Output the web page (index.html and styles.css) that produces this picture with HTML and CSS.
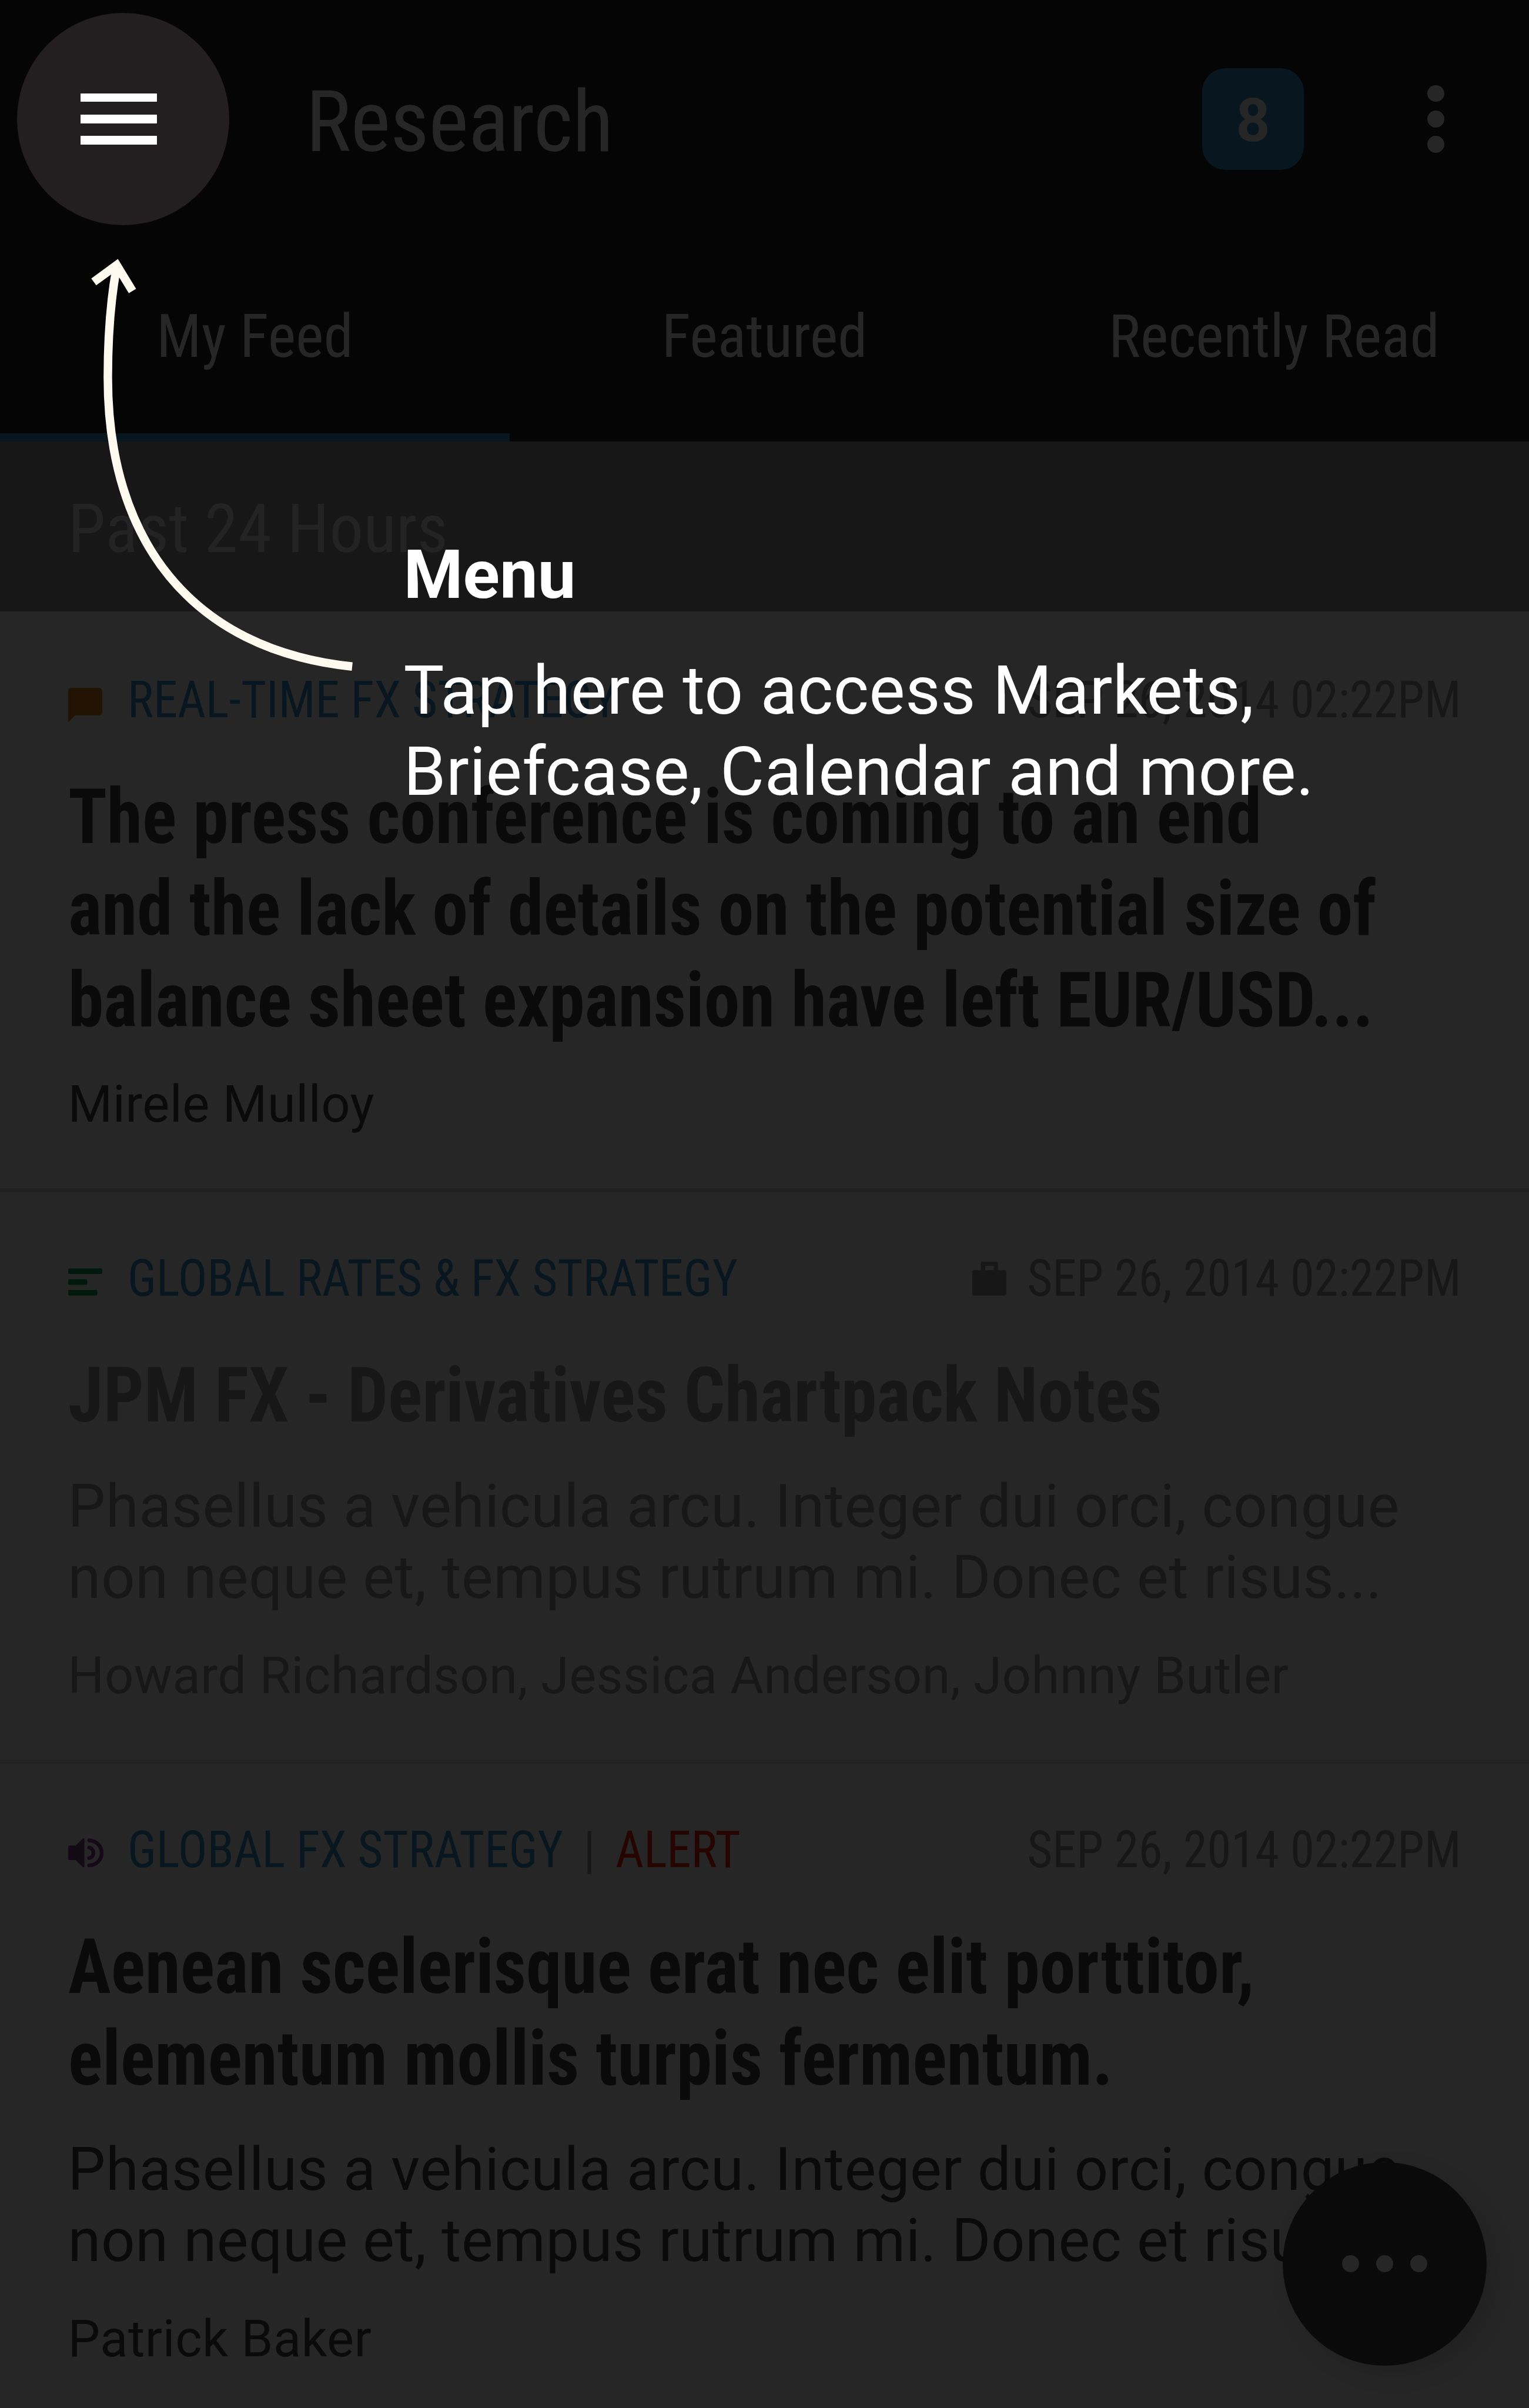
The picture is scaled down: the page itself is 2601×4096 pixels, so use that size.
FILE: index.html
```html
<!DOCTYPE html>
<html lang="en">
<head>
<meta charset="utf-8">
<title>Research</title>
<link rel="stylesheet" href="styles.css">
</head>
<body>
<div class="screen">
  <header class="app-bar">
    <div class="toolbar">
      <h1 class="title">Research</h1>
      <span class="count">8</span>
      <span class="overflow"><i></i><i></i><i></i></span>
    </div>
    <nav class="tabs">
      <a class="tab tab-active">My Feed</a>
      <a class="tab">Featured</a>
      <a class="tab">Recently Read</a>
    </nav>
  </header>

  <h2 class="section">Past 24 Hours</h2>

  <main class="feed">
    <article class="card">
      <div class="meta">
        <svg class="icon icon-comment" viewBox="0 0 8 8"><path d="M0.7 1H7.3A.7.7 0 0 1 8 1.7V6.75A.7.7 0 0 1 7.3 7.45H1.65L0 9.1V1.7A.7.7 0 0 1 .7 1Z"/></svg>
        <span class="topics">REAL-TIME FX STRATEGY</span>
        <span class="date">SEP 26, 2014 02:22PM</span>
      </div>
      <h3 class="headline">The press conference is coming to an end<br>and the lack of details on the potential size of<br>balance sheet expansion have left EUR/USD...</h3>
      <p class="author">Mirele Mulloy</p>
    </article>

    <article class="card card-read">
      <div class="meta">
        <svg class="icon icon-lines" viewBox="0 0 8 8"><rect y="1.6" width="8" height="1.32" rx=".25"/><rect y="4.14" width="4.48" height="1.32" rx=".25"/><rect y="6.68" width="6.85" height="1.32" rx=".25"/></svg>
        <span class="topics">GLOBAL RATES &amp; FX STRATEGY</span>
        <svg class="icon icon-case" viewBox="0 0 8 8"><path fill-rule="evenodd" d="M2 2V.45A.45.45 0 0 1 2.45 0H5.6A.45.45 0 0 1 6.05 .45V2H7.55A.45.45 0 0 1 8 2.45V7.55A.45.45 0 0 1 7.55 8H.45A.45.45 0 0 1 0 7.55V2.45A.45.45 0 0 1 .45 2ZM3.03 1.02V2H5.03V1.02Z"/></svg>
        <span class="date">SEP 26, 2014 02:22PM</span>
      </div>
      <h3 class="headline">JPM FX - Derivatives Chartpack Notes</h3>
      <p class="body">Phasellus a vehicula arcu. Integer dui orci, congue<br>non neque et, tempus rutrum mi. Donec et risus...</p>
      <p class="author">Howard Richardson, Jessica Anderson, Johnny Butler</p>
    </article>

    <article class="card">
      <div class="meta">
        <svg class="icon icon-audio" viewBox="0 0 8 8"><path d="M.3 2.95H1.75L3.45 1.32Q3.82 1.1 3.82 1.5V7.85Q3.82 8.2 3.45 8L1.75 6.35H.3Q0 6.35 0 6.05V3.25Q0 2.95 .3 2.95Z"/><path class="wave" d="M4.95 3.42A1.27 1.27 0 0 1 4.95 5.9M4.95 1.74A2.93 2.93 0 0 1 4.95 7.6"/></svg>
        <span class="topics">GLOBAL FX STRATEGY<span class="pipe">|</span><span class="alert">ALERT</span></span>
        <span class="date">SEP 26, 2014 02:22PM</span>
      </div>
      <h3 class="headline">Aenean scelerisque erat nec elit porttitor,<br>elementum mollis turpis fermentum.</h3>
      <p class="body">Phasellus a vehicula arcu. Integer dui orci, congue<br>non neque et, tempus rutrum mi. Donec et risus...</p>
      <p class="author">Patrick Baker</p>
    </article>
  </main>

  <button class="fab"><i></i><i></i><i></i></button>

  <button class="menu-button"><i></i><i></i><i></i></button>

  <svg class="arrow" viewBox="0 0 3200 5040">
    <path d="M737 1395C400 1360 225.5 1130 225.5 790C225.5 700 233 620 243 564"/>
    <path d="M196 590L244 555L277 609"/>
  </svg>

  <aside class="tip">
    <h2 class="tip-title">Menu</h2>
    <p class="tip-text">Tap here to access Markets,<br>Briefcase, Calendar and more.</p>
  </aside>
</div>
</body>
</html>
```
FILE: styles.css
```css
/* 1rem is one density-independent pixel of the 360dp wide screen */
html {
  font-size: 7.225px;
}

* {
  box-sizing: border-box;
}

body,
h1,
h2,
h3,
p {
  margin: 0;
}

body {
  background: #262626;
  font-family: Roboto, "Noto Sans", sans-serif;
  line-height: 1.2;
}

h1,
h2,
h3 {
  font-weight: 400;
}

button {
  border: 0;
  padding: 0;
}

.screen {
  position: relative;
  width: 100%;
  height: 4096px;
  overflow: hidden;
  white-space: nowrap;
}

.title,
.tab,
.section,
.meta,
.headline {
  font-family: "Roboto Condensed", Roboto, sans-serif;
}

/* App bar */
.app-bar {
  background: #050505;
  color: #262626;
}

.toolbar {
  display: flex;
  align-items: center;
  height: 56rem;
  padding: 0 20rem 0 72rem;
}

.title {
  flex: 1;
  padding-top: 1.4rem;
  font-size: 20rem;
  letter-spacing: -.003em;
}

.count {
  width: 24rem;
  height: 24rem;
  margin-right: 29rem;
  border-radius: 5.5rem;
  background: #081620;
  font-size: 14rem;
  font-weight: 700;
  line-height: 25rem;
  text-align: center;
}

.overflow {
  display: flex;
  flex-direction: column;
  gap: 2rem;
}

.overflow i,
.fab i {
  width: 4rem;
  height: 4rem;
  border-radius: 50%;
  background: #262626;
}

.tabs {
  display: grid;
  grid-template-columns: repeat(3, 1fr);
}

.tab {
  height: 48rem;
  padding-top: 14.8rem;
  border-bottom: 2rem solid transparent;
  font-size: 14rem;
  text-align: center;
}

.tab-active {
  border-color: #081620;
}

.section {
  height: 40rem;
  padding: 11.05rem 16rem 0;
  background: #171717;
  color: #232323;
  font-size: 16rem;
}

/* Feed */
.card {
  padding: 13.1rem 16rem 12.45rem;
  border-top: 1rem solid #222;
  color: #0a0a0a;
}

.card:first-child {
  padding-top: 13.7rem;
  border-top: 0;
}

.card-read {
  color: #171717;
}

.meta {
  display: flex;
  align-items: baseline;
  font-size: 12rem;
}

.icon {
  flex: none;
  width: 8rem;
  height: 8rem;
  margin-right: 6rem;
  overflow: visible;
}

.icon-comment {
  fill: #231302;
}

.icon-lines {
  fill: #00180d;
}

.icon-audio {
  fill: #150817;
}

.wave {
  fill: none;
  stroke: #150817;
  stroke-width: .88;
  stroke-linecap: round;
}

.icon-case {
  margin: 0 -.1rem 0 auto;
  fill: #171717;
}

/* The meta line and headlines are set narrower than the condensed face */
.topics {
  color: #081620;
  transform: scaleX(.956);
  transform-origin: left;
}

.pipe {
  margin: 0 5rem;
  color: #171717;
}

.alert {
  color: #260400;
}

.date {
  margin-left: auto;
  color: #171717;
  transform: scaleX(.953);
  transform-origin: right;
}

.icon-case + .date {
  margin-left: 0;
}

.headline {
  margin-top: 9.55rem;
  font-size: 18rem;
  font-weight: 700;
  transform: scaleX(.936);
  transform-origin: left;
}

.body {
  margin-top: 6.95rem;
  font-size: 14rem;
  letter-spacing: .0057em;
}

.author {
  margin-top: 7.5rem;
  font-size: 12rem;
  letter-spacing: .0055em;
}

.headline + .author {
  margin-top: 6.45rem;
}

.fab {
  position: absolute;
  top: 509rem;
  right: 10rem;
  display: flex;
  align-items: center;
  justify-content: center;
  gap: 4rem;
  width: 48rem;
  height: 48rem;
  border-radius: 50%;
  background: #0a0a0a;
  box-shadow: 2rem 2rem 5rem rgba(0, 0, 0, .15);
}

/* Coach mark */
.menu-button {
  position: absolute;
  top: 3rem;
  left: 4rem;
  display: flex;
  flex-direction: column;
  align-items: center;
  justify-content: center;
  gap: 3rem;
  width: 50rem;
  height: 50rem;
  padding-right: 2rem;
  border-radius: 50%;
  background: #231f20;
}

.menu-button i {
  width: 18rem;
  height: 2rem;
  background: #fff;
}

.arrow {
  position: absolute;
  top: 0;
  left: 0;
  width: 100%;
  height: 100%;
  fill: none;
  stroke: #fffaf0;
  stroke-width: 17.8;
}

.tip {
  position: absolute;
  top: 125.85rem;
  left: 95rem;
  color: #fff;
  font-size: 16rem;
}

.tip-title {
  font-size: 16rem;
  font-weight: 700;
}

.tip-text {
  margin-top: 8rem;
  letter-spacing: .0027em;
}
```
